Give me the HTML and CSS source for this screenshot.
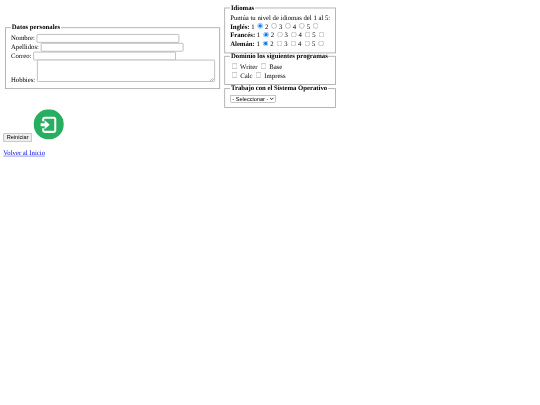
FILE: index.html
```html
<!DOCTYPE html>
<html lang="es">
<head>
  <meta charset="UTF-8">
  <meta name="viewport" content="width=device-width, initial-scale=1.0">
  <title>Formulario</title>
  <link rel="stylesheet" href="styles.css">
</head>
<body>
  <div class="page">
    <form>
      <div class="columns">
        <fieldset class="personal">
          <legend>Datos personales</legend>
          Nombre: <input class="name" type="text"><br>
          Apellidos: <input class="name" type="text"><br>
          Correo: <input class="name" type="text"><br>
          Hobbies: <textarea class="hobbies" rows="3"></textarea>
        </fieldset>

        <div class="side">
          <fieldset class="languages">
            <legend>Idiomas</legend>
            Puntúa tu nivel de idiomas del 1 al 5:<br>
            <b>Inglés:</b> 1 <input type="radio" name="en" checked> 2 <input type="radio" name="en"> 3 <input type="radio" name="en"> 4 <input type="radio" name="en"> 5 <input type="radio" name="en"><br>
            <b>Francés:</b> 1 <input type="radio" name="fr" checked> 2 <input type="radio" name="fr"> 3 <input type="radio" name="fr"> 4 <input type="radio" name="fr"> 5 <input type="radio" name="fr"><br>
            <b>Alemán:</b> 1 <input type="radio" name="de" checked> 2 <input type="radio" name="de"> 3 <input type="radio" name="de"> 4 <input type="radio" name="de"> 5 <input type="radio" name="de">
          </fieldset>

          <fieldset>
            <legend>Dominio los siguientes programas</legend>
            <input type="checkbox"> Writer <input type="checkbox"> Base<br>
            <input type="checkbox"> Calc <input type="checkbox"> Impress
          </fieldset>

          <fieldset>
            <legend>Trabajo con el Sistema Operativo</legend>
            <select>
              <option>- Seleccionar -</option>
            </select>
          </fieldset>
        </div>
      </div>

      <button type="reset">Reiniciar</button>
      <svg class="enter" viewBox="0 0 30 30">
        <circle cx="15" cy="15" r="15" fill="#27ae60"/>
        <path d="M9.500 12v-2a1.500 1.500 0 0 1 1.500-1.500h9a1.500 1.500 0 0 1 1.500 1.500v11a1.500 1.500 0 0 1-1.500 1.500h-9a1.500 1.500 0 0 1-1.500-1.500v-2" fill="none" stroke="#fff" stroke-width="2"/>
        <path d="M7 14h4v-3l5 4.500-5 4.500v-3H7z" fill="#fff"/>
      </svg>
    </form>

    <p class="back"><a href="#">Volver al Inicio</a></p>
  </div>
</body>
</html>
```

FILE: styles.css
```css
html {
  overflow: hidden;
}

body {
  margin: 0;
}

.page {
  width: 820px;
  box-sizing: border-box;
  padding: 8px;
  font-family: "Liberation Serif", serif;
  text-rendering: geometricPrecision;
  transform: scale(0.42);
  transform-origin: 0 0;
  filter: blur(0.5px);
}

.columns {
  display: flex;
  align-items: flex-start;
  height: 252px;
}

legend {
  font-weight: bold;
}

fieldset {
  min-width: 0;
  white-space: nowrap;
  border: 2.400px solid #a8a8a8;
}

input[type="radio"] {
  margin: 3px 1px 0 3px;
}

.name,
.hobbies {
  box-sizing: border-box;
  border: 2.400px solid #b4b4b4;
  border-radius: 3px;
}

.name {
  width: 340px;
  height: 21px;
}

.hobbies {
  width: 424px;
  margin-top: -2px;
}

.personal {
  width: 512px;
  box-sizing: border-box;
  margin: 49px 0 0 4px;
}

.side {
  width: 266px;
  margin-left: 10px;
  margin-top: 2px;
}

.side fieldset {
  margin: 0;
  box-sizing: border-box;
}

.side .languages {
  margin-bottom: -2px;
}

.enter {
  width: 72px;
  height: 72px;
}

.back {
  margin-top: 19px;
}
```
